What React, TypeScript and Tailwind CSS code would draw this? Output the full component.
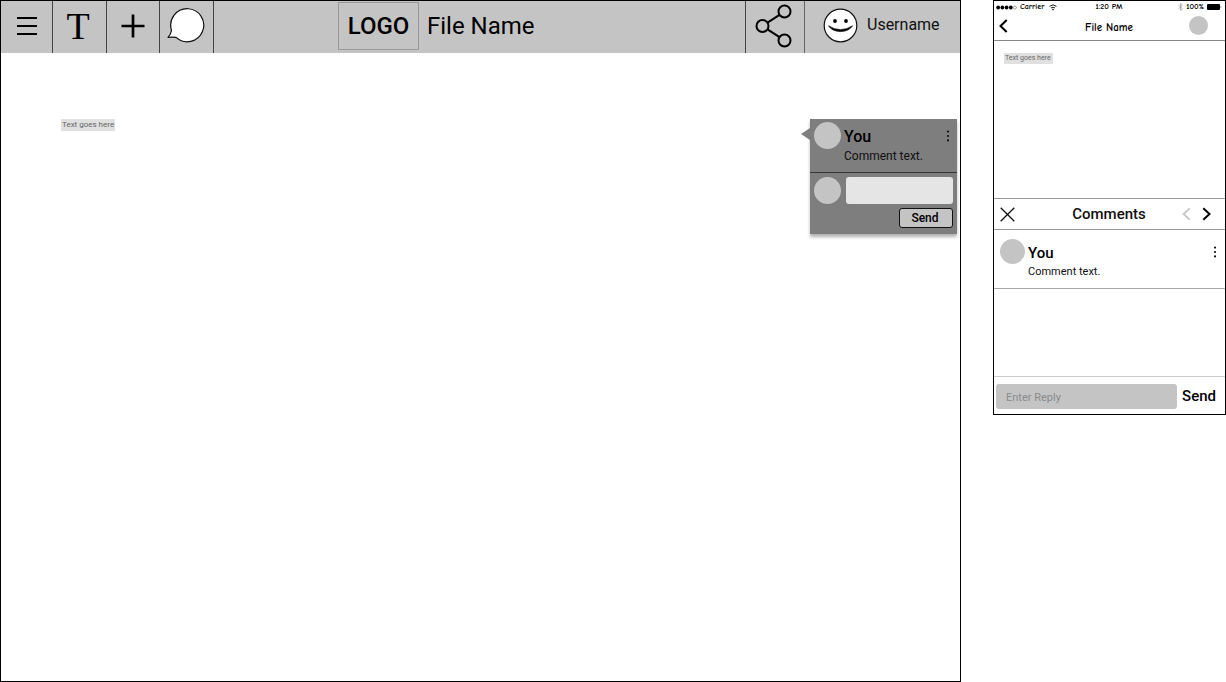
import React from "react";

function Avatar({ className }: { className: string }) {
  return <span aria-hidden="true" className={`block shrink-0 rounded-full bg-[#c4c4c4] ${className}`} />;
}

function Dots() {
  return (
    <svg width="4" height="12" viewBox="0 0 4 12" fill="#111" aria-hidden="true">
      <circle cx="2" cy="1.6" r="1.1" />
      <circle cx="2" cy="6" r="1.1" />
      <circle cx="2" cy="10.4" r="1.1" />
    </svg>
  );
}

function ToolButton({ label, className, children }: { label: string; className: string; children: React.ReactNode }) {
  return (
    <button type="button" aria-label={label} className={`flex shrink-0 items-center justify-center border-r border-[#444] pb-[2px] ${className}`}>
      {children}
    </button>
  );
}

function DesktopHeader() {
  return (
    <header className="flex h-[52px] items-stretch bg-[#c4c4c4]">
      <ToolButton label="Menu" className="w-[52px]">
        <svg width="20" height="20" viewBox="0 0 20 20" stroke="#000" strokeWidth="2" aria-hidden="true">
          <path d="M0 2h20M0 10h20M0 18h20" />
        </svg>
      </ToolButton>
      <ToolButton label="Text" className="w-[54px] pr-[3px]">
        <span className="font-['Liberation_Serif',serif] text-[38px] leading-[48px]">T</span>
      </ToolButton>
      <ToolButton label="Add" className="w-[53px]">
        <svg width="24" height="24" viewBox="0 0 24 24" stroke="#000" strokeWidth="2.7" aria-hidden="true">
          <path d="M0.5 12h23M12 0.5v23" />
        </svg>
      </ToolButton>
      <ToolButton label="Comment" className="w-[54px] pr-[2px]">
        <svg width="38" height="36" viewBox="0 0 38 36" aria-hidden="true">
          <path d="M4.5 22.2A16.5 16.5 0 1 1 9.1 29.4Q4.8 28.7 1 29.4Q4 26.2 4.5 22.2Z" fill="#fff" stroke="#111" strokeWidth="1.2" strokeLinejoin="round" />
        </svg>
      </ToolButton>
      <div className="flex min-w-0 flex-1 items-center pb-[2px] pl-[124px]">
        <div className="flex h-12 w-[81px] shrink-0 items-center justify-center border border-[#999] text-2xl font-medium">LOGO</div>
        <h1 className="ml-2 whitespace-nowrap text-2xl">File Name</h1>
      </div>
      <button type="button" aria-label="Share" className="flex w-[59px] shrink-0 items-center justify-center border-l border-[#444] pb-[2px] pr-[2px]">
        <svg width="38" height="44" viewBox="0 0 38 44" fill="none" stroke="#000" strokeWidth="2" aria-hidden="true">
          <circle cx="7.5" cy="22" r="6" />
          <circle cx="29.5" cy="7.5" r="6" />
          <circle cx="29.5" cy="36.5" r="6" />
          <path d="M12.5 18.7l12-7.9M12.5 25.3l12 7.9" />
        </svg>
      </button>
      <button type="button" className="flex w-[156px] shrink-0 items-center gap-[9px] border-l border-[#666] pb-1 pl-[18px] text-[#111]">
        <svg width="35" height="35" viewBox="0 0 35 35" aria-hidden="true">
          <circle cx="17.5" cy="17.5" r="16.3" fill="#fff" stroke="#111" strokeWidth="1.2" />
          <circle cx="12" cy="13" r="1.9" />
          <circle cx="23" cy="13" r="1.9" />
          <path d="M5.5 17.8Q17.5 25.5 29.5 17.8Q26 23.4 17.5 23.6Q9 23.4 5.5 17.8Z" stroke="#000" strokeWidth="0.7" strokeLinejoin="round" />
        </svg>
        <span className="text-base">Username</span>
      </button>
    </header>
  );
}

function CommentCard() {
  return (
    <section aria-label="Comment thread" className="relative w-[147px] shrink-0 bg-[#7e7e7e] shadow-[0_3px_3px_rgba(0,0,0,0.3)]">
      <svg className="absolute -left-[9px] top-[9px]" width="9" height="12" viewBox="0 0 9 12" aria-hidden="true">
        <path d="M9 0v12L0 6z" fill="#7e7e7e" />
      </svg>
      <div className="flex h-[54px] gap-[3px] border-b border-[#333] pl-1 pr-[7px] pt-[3px]">
        <Avatar className="size-[27px]" />
        <div className="flex-1">
          <h2 className="pt-[5px] text-base font-medium leading-5">You</h2>
          <p className="text-xs leading-[18px] text-[#111]">Comment text.</p>
        </div>
        <button type="button" aria-label="Comment options" className="flex h-7 items-center">
          <Dots />
        </button>
      </div>
      <form className="flex h-[61px] flex-col items-end gap-1 pl-1 pr-1 pt-1" onSubmit={(e) => e.preventDefault()}>
        <div className="flex w-full items-center gap-[5px]">
          <Avatar className="size-[27px]" />
          <input aria-label="Reply" className="h-[27px] w-0 flex-1 rounded-[3px] bg-[#e5e5e5] px-2 text-xs outline-none" />
        </div>
        <button type="submit" className="h-5 w-[54px] rounded-[3px] border border-[#111] bg-[#c4c4c4] pr-[2px] text-xs font-medium leading-4">
          Send
        </button>
      </form>
    </section>
  );
}

function StatusBar() {
  return (
    <div className="grid h-3 grid-cols-3 items-center pl-[2px] pr-[3px] text-[8px] font-bold leading-3">
      <div className="flex items-center gap-[3px]">
        <svg width="21" height="5" viewBox="0 0 21 5" aria-hidden="true">
          <circle cx="2.2" cy="2.5" r="1.9" />
          <circle cx="6.4" cy="2.5" r="1.9" />
          <circle cx="10.6" cy="2.5" r="1.9" />
          <circle cx="14.8" cy="2.5" r="1.9" />
          <circle cx="18.9" cy="2.5" r="1.5" fill="none" stroke="#666" strokeWidth="0.6" />
        </svg>
        <span>Carrier</span>
        <svg width="8" height="7" viewBox="0 0 8 7" fill="none" stroke="#000" strokeWidth="0.9" className="ml-[2px]" aria-hidden="true">
          <path d="M0.5 2.3Q4-.6 7.5 2.3M2 4Q4 2.3 6 4" />
          <circle cx="4" cy="5.6" r="0.8" fill="#000" stroke="none" />
        </svg>
      </div>
      <div className="text-center">1:20 PM</div>
      <div className="flex items-center justify-end gap-[3px]">
        <svg width="5" height="8" viewBox="0 0 5 8" fill="none" stroke="#999" strokeWidth="0.7" aria-hidden="true">
          <path d="M0.5 2.2l4 3.6L2.5 7.5v-7l2 1.7l-4 3.6" />
        </svg>
        <span>100%</span>
        <svg width="15" height="6" viewBox="0 0 15 6" aria-hidden="true">
          <rect width="13" height="6" rx="1" />
          <path d="M13.7 2q1.2 1 0 2z" />
        </svg>
      </div>
    </div>
  );
}

function Phone() {
  return (
    <section aria-label="Mobile view" className="w-[233px] shrink-0 border border-black">
      <header className="border-b border-[#888] font-['Comic_Sans_MS','Comic_Neue','Noto_Sans',sans-serif]">
        <StatusBar />
        <div className="grid h-[27px] grid-cols-3 items-center pb-[2px] pl-[5px] pr-[17px]">
          <button type="button" aria-label="Back" className="justify-self-start">
            <svg width="9" height="14" viewBox="0 0 9 14" fill="none" stroke="#000" strokeWidth="2" aria-hidden="true">
              <path d="M7.7 1L1.5 7l6.2 6" />
            </svg>
          </button>
          <h2 className="whitespace-nowrap pl-[11px] pt-[5px] text-center text-[11px] font-bold leading-4">File Name</h2>
          <Avatar className="size-[19px] justify-self-end" />
        </div>
      </header>
      <div className="h-[157px] px-[10px] pt-3">
        <p className="w-fit bg-[#e0e0e0] pl-[1px] pr-[2px] text-[7px] leading-[11px] text-[#666]">Text goes here</p>
      </div>
      <div className="grid h-8 grid-cols-[1fr_auto_1fr] items-center border-y border-[#999] pl-[6px] pr-[14px]">
        <button type="button" aria-label="Close comments" className="justify-self-start">
          <svg width="15" height="15" viewBox="0 0 15 15" stroke="#111" strokeWidth="1.3" aria-hidden="true">
            <path d="M.7.7l13.6 13.6M14.3.7L.7 14.3" />
          </svg>
        </button>
        <h3 className="pl-[7px] text-[15px] font-medium text-[#111]">Comments</h3>
        <div className="flex gap-[11px] justify-self-end">
          <button type="button" aria-label="Previous comment" disabled>
            <svg width="9" height="14" viewBox="0 0 9 14" fill="none" stroke="#c4c4c4" strokeWidth="1.7" aria-hidden="true">
              <path d="M7.7 1.3L1.5 7l6.2 5.7" />
            </svg>
          </button>
          <button type="button" aria-label="Next comment">
            <svg width="9" height="14" viewBox="0 0 9 14" fill="none" stroke="#000" strokeWidth="2" aria-hidden="true">
              <path d="M1.3 1.3L7.5 7l-6.2 5.7" />
            </svg>
          </button>
        </div>
      </div>
      <div className="flex h-[59px] gap-[3px] border-b border-[#aaa] pl-[6px] pr-[8px] pt-[9px]">
        <Avatar className="size-[25px]" />
        <div className="flex-1">
          <h4 className="pt-1 text-[15px] font-medium leading-5">You</h4>
          <p className="text-[11px] leading-[18px] text-[#111]">Comment text.</p>
        </div>
        <button type="button" aria-label="Comment options" className="flex h-[26px] items-center">
          <Dots />
        </button>
      </div>
      <form className="mt-[87px] flex h-[38px] items-center gap-1 border-t border-[#ccc] pl-[2px] pr-[9px] pt-[2px]" onSubmit={(e) => e.preventDefault()}>
        <input aria-label="Enter Reply" placeholder="Enter Reply" className="h-[25px] w-0 flex-1 rounded-[3px] bg-[#c4c4c4] px-[10px] pt-[2px] text-[11px] outline-none placeholder:text-[#8a8a8a]" />
        <button type="submit" className="pl-[1px] text-[15px] font-medium">
          Send
        </button>
      </form>
    </section>
  );
}

export default function App() {
  return (
    <div className="flex min-h-screen items-start gap-8 bg-white font-['Roboto',sans-serif] text-black">
      <section aria-label="Desktop view" className="min-h-screen min-w-0 flex-1 border border-black">
        <DesktopHeader />
        <main className="flex items-start justify-between pl-[60px] pr-[3px] pt-[66px]">
          <p className="bg-[#e0e0e0] px-[1px] text-[8px] leading-[12px] text-[#666]">Text goes here</p>
          <CommentCard />
        </main>
      </section>
      <Phone />
    </div>
  );
}
